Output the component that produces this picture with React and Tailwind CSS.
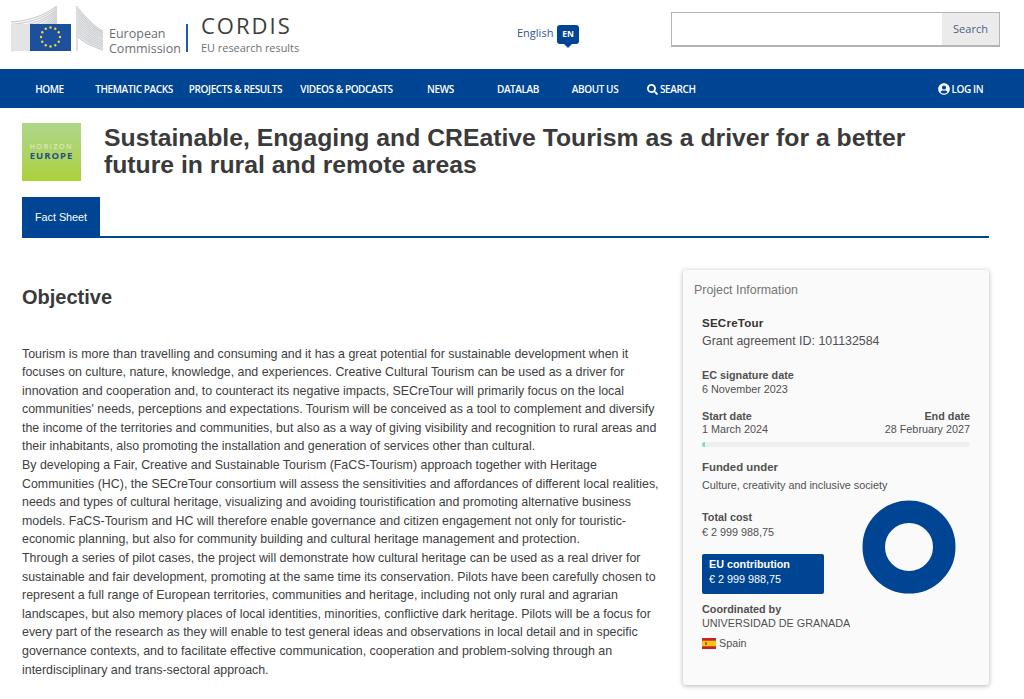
import { FaSearch, FaUserCircle } from "react-icons/fa";

const navItems = [
  { label: "HOME", cls: "ml-[36px] w-[27px]" },
  { label: "THEMATIC PACKS", cls: "ml-[33px] w-[76px]" },
  { label: "PROJECTS & RESULTS", cls: "ml-[15px] w-[97px]" },
  { label: "VIDEOS & PODCASTS", cls: "ml-[15px] w-[95px]" },
  { label: "NEWS", cls: "ml-[33px] w-[27px]" },
  { label: "DATALAB", cls: "ml-[44px] w-[40px]" },
  { label: "ABOUT US", cls: "ml-[34px] w-[46px]" },
];

const paragraphs = [
  "Tourism is more than travelling and consuming and it has a great potential for sustainable development when it focuses on culture, nature, knowledge, and experiences. Creative Cultural Tourism can be used as a driver for innovation and cooperation and, to counteract its negative impacts, SECreTour will primarily focus on the local communities' needs, perceptions and expectations. Tourism will be conceived as a tool to complement and diversify the income of the territories and communities, but also as a way of giving visibility and recognition to rural areas and their inhabitants, also promoting the installation and generation of services other than cultural.",
  "By developing a Fair, Creative and Sustainable Tourism (FaCS-Tourism) approach together with Heritage Communities (HC), the SECreTour consortium will assess the sensitivities and affordances of different local realities, needs and types of cultural heritage, visualizing and avoiding touristification and promoting alternative business models. FaCS-Tourism and HC will therefore enable governance and citizen engagement not only for touristic-economic planning, but also for community building and cultural heritage management and protection.",
  "Through a series of pilot cases, the project will demonstrate how cultural heritage can be used as a real driver for sustainable and fair development, promoting at the same time its conservation. Pilots have been carefully chosen to represent a full range of European territories, communities and heritage, including not only rural and agrarian landscapes, but also memory places of local identities, minorities, conflictive dark heritage. Pilots will be a focus for every part of the research as they will enable to test general ideas and observations in local detail and in specific governance contexts, and to facilitate effective communication, cooperation and problem-solving through an interdisciplinary and trans-sectoral approach.",
];

const wingLines = [0, 1, 2, 3, 4, 5, 6, 7, 8, 9, 10, 11, 12];

function EcLogo() {
  return (
    <svg width="94" height="46" viewBox="0 0 94 46" className="shrink-0">
      {/* left wing */}
      {wingLines.map((i) => (
        <path
          key={i}
          d={`M0 ${16 + i * 2.4} C 20 ${15 + i * 2.4}, 34 ${9 + i * 2.6}, 46 ${i * 1.6}`}
          fill="none"
          stroke="#cfd2d4"
          strokeWidth="1.3"
        />
      ))}
      <rect x="0" y="18" width="19" height="27" fill="#e2e4e5" />
      {/* right wing */}
      {wingLines.map((i) => (
        <path
          key={i}
          d={`M65 ${i * 2.4} C 72 ${8 + i * 2.4}, 82 ${21 + i * 1.6}, 92 ${25 + i * 1.6}`}
          fill="none"
          stroke="#cfd2d4"
          strokeWidth="1.3"
        />
      ))}
      <rect x="65" y="0" width="2" height="45" fill="#dcdfe0" />
      <rect x="19" y="18" width="41" height="27" fill="#1c4f9c" />
      {Array.from({ length: 12 }).map((_, i) => {
        const a = (i * Math.PI) / 6;
        return (
          <circle
            key={i}
            cx={39.5 + Math.cos(a) * 9.5}
            cy={31 + Math.sin(a) * 9.5}
            r="1.2"
            fill="#f4d63a"
          />
        );
      })}
    </svg>
  );
}

function SpainFlag() {
  return (
    <svg width="14" height="11" viewBox="0 0 14 11" className="shrink-0">
      <rect width="14" height="11" fill="#c8202a" />
      <rect y="2.7" width="14" height="5.6" fill="#f5c518" />
      <rect x="3" y="4" width="2" height="3" fill="#b5651d" />
    </svg>
  );
}

export default function App() {
  return (
    <div className="w-[1024px] h-[699px] overflow-hidden bg-white font-['Liberation_Sans',Arial,sans-serif] text-[#404040]">
      {/* Top header */}
      <header className="h-[69px] flex items-start">
        <div className="ml-[11px] mt-[6px]">
          <EcLogo />
        </div>
        <div className="ml-[4px] mt-[26px] w-[73px] text-[12.5px] leading-[15px] text-[#6b6f73] font-['Open_Sans',sans-serif]">
          European
          <br />
          Commission
        </div>
        <div className="ml-[4px] mt-[24px] w-[2px] h-[28px] bg-[#1c5fa8]" />
        <div className="ml-[13px] mt-[12px] w-[100px] font-['Open_Sans',sans-serif]">
          <div className="text-[22px] leading-[26px] tracking-[2px] text-[#3c3c3c]">CORDIS</div>
          <div className="text-[10.9px] leading-[16px] mt-[2px] text-[#6b6f73] whitespace-nowrap">EU research results</div>
        </div>
        <div className="ml-[216px] mt-[25px] flex items-start font-['Open_Sans',sans-serif]">
          <span className="w-[40px] text-[11px] leading-[16px] text-[#2f5596]">English</span>
          <div className="relative w-[22px] h-[19px] rounded-[3px] bg-[#004494] flex items-center justify-center text-[8.5px] font-bold text-white">
            EN
            <span className="absolute left-[6px] -bottom-[4px] w-0 h-0 border-l-[5px] border-r-[5px] border-t-[5px] border-l-transparent border-r-transparent border-t-[#004494]" />
          </div>
        </div>
        <div className="ml-[92px] mt-[12px] w-[329px] h-[35px] flex border border-[#b4b4b4] border-b-2">
          <div className="flex-1 bg-white" />
          <div className="w-[57px] bg-[#ebebeb] flex items-center justify-center text-[11px] text-[#4c6285] font-['Open_Sans',sans-serif]">
            Search
          </div>
        </div>
      </header>

      {/* Main nav */}
      <nav className="h-[39px] pt-[1px] bg-[#004494] flex items-center text-white text-[10px] font-semibold tracking-[-0.4px] font-['Open_Sans',sans-serif] whitespace-nowrap">
        {navItems.map((item) => (
          <a key={item.label} className={`${item.cls} flex justify-center`}>
            {item.label}
          </a>
        ))}
        <a className="ml-[29px] flex items-center gap-[2px]">
          <FaSearch size={11} />
          SEARCH
        </a>
        <a className="ml-[242px] flex items-center gap-[2px]">
          <FaUserCircle size={12} />
          LOG IN
        </a>
      </nav>

      {/* Title block */}
      <div className="mx-[22px] w-[967px]">
        <div className="flex pt-[15px]">
          <div className="w-[59px] h-[58px] shrink-0 bg-gradient-to-b from-[#aed68a] to-[#add136] flex flex-col items-center justify-center font-['Open_Sans',sans-serif]">
            <div className="text-[7px] leading-[8px] tracking-[1.7px] text-[#e6f2d0]">HORIZON</div>
            <div className="text-[9.5px] leading-[10px] tracking-[1px] font-bold text-[#1f4e8c]">EUROPE</div>
          </div>
          <h1 className="ml-[23px] mt-[1px] text-[24.75px] leading-[27px] font-bold text-[#3a3a3a]">
            Sustainable, Engaging and CREative Tourism as a driver for a better
            <br />
            future in rural and remote areas
          </h1>
        </div>

        {/* Tabs */}
        <div className="mt-[16px] border-b-2 border-[#004494] h-[41px]">
          <div className="w-[78px] h-[40px] bg-[#004494] text-white text-[10.8px] flex items-center justify-center">
            Fact Sheet
          </div>
        </div>

        {/* Content */}
        <div className="flex items-start mt-[32px]">
          <main className="w-[640px] shrink-0 pt-[15px]">
            <h2 className="text-[20px] leading-[24px] font-bold text-[#3a3a3a]">Objective</h2>
            <div className="mt-[35.5px] text-[12.4px] leading-[18.6px] text-[#404040]">
              {paragraphs.map((p) => (
                <p key={p.slice(0, 12)}>{p}</p>
              ))}
            </div>
          </main>

          {/* Project info */}
          <aside className="ml-[21px] w-[306px] h-[415px] bg-[#fafafa] rounded-[3px] shadow-[0_1px_5px_rgba(0,0,0,0.3)] px-[11px] pt-[12px] text-[#505050]">
            <div className="text-[12.4px] leading-[16px] text-[#757575]">Project Information</div>
            <div className="pl-[8px] pr-[8px]">
              <div className="mt-[18px] text-[11.6px] leading-[14px] font-bold text-[#333] tracking-[0.2px]">SECreTour</div>
              <div className="mt-[2px] text-[12.4px] leading-[18px]">Grant agreement ID: 101132584</div>

              <div className="mt-[18px] text-[10.8px] leading-[14px] font-bold">EC signature date</div>
              <div className="text-[10.8px] leading-[14px]">6 November 2023</div>

              <div className="mt-[14px] flex justify-between text-[10.8px] leading-[13px]">
                <div>
                  <div className="font-bold">Start date</div>
                  <div>1 March 2024</div>
                </div>
                <div className="text-right">
                  <div className="font-bold">End date</div>
                  <div>28 February 2027</div>
                </div>
              </div>
              <div className="mt-[6px] h-[5px] rounded-full bg-[#eeeeee] overflow-hidden">
                <div className="h-full w-[3px] bg-[#7be0b4]" />
              </div>

              <div className="mt-[13px] text-[11.4px] leading-[14px] font-bold">Funded under</div>
              <div className="mt-[4px] text-[10.8px] leading-[14px]">Culture, creativity and inclusive society</div>

              <div className="flex mt-[18px]">
                <div className="w-[160px] shrink-0">
                  <div className="text-[10.8px] leading-[14px] font-bold">Total cost</div>
                  <div className="mt-[1px] text-[10.8px] leading-[14px]">€ 2 999 988,75</div>
                  <div className="mt-[15px] w-[122px] h-[40px] rounded-[2px] bg-[#004494] text-white px-[7px] pt-[3px] text-[10.8px] leading-[15px]">
                    <div className="font-bold">EU contribution</div>
                    <div>€ 2 999 988,75</div>
                  </div>
                </div>
                <div className="-mt-[10px]">
                  <svg width="94" height="94" viewBox="0 0 94 94">
                    <circle cx="47" cy="47" r="35.25" fill="none" stroke="#004494" strokeWidth="22.5" />
                  </svg>
                </div>
              </div>

              <div className="mt-[9px] text-[10.8px] leading-[13px] font-bold">Coordinated by</div>
              <div className="text-[10.8px] leading-[14px]">UNIVERSIDAD DE GRANADA</div>
              <div className="mt-[6px] flex items-center gap-[3px] text-[10.8px] leading-[14px]">
                <SpainFlag />
                Spain
              </div>
            </div>
          </aside>
        </div>
      </div>
    </div>
  );
}
